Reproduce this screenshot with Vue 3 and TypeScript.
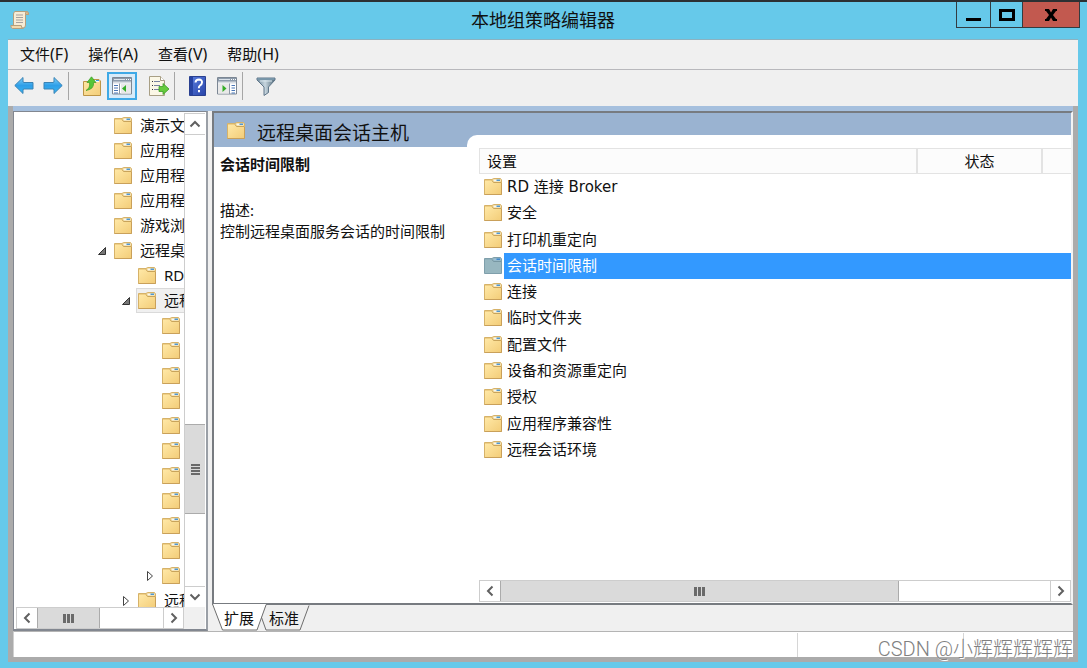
<script setup lang="ts">
import { ref } from 'vue'

interface TreeNode {
  label: string
  depth: number
  state?: 'open' | 'closed'
  selected?: boolean
}

const menus = [
  { text: '文件', key: '(F)' },
  { text: '操作', key: '(A)' },
  { text: '查看', key: '(V)' },
  { text: '帮助', key: '(H)' },
]

const tree: TreeNode[] = [
  { label: '演示文', depth: 0 },
  { label: '应用程', depth: 0 },
  { label: '应用程', depth: 0 },
  { label: '应用程', depth: 0 },
  { label: '游戏浏', depth: 0 },
  { label: '远程桌', depth: 0, state: 'open' },
  { label: 'RD', depth: 1 },
  { label: '远程', depth: 1, state: 'open', selected: true },
  ...Array.from({ length: 10 }, (): TreeNode => ({ label: '', depth: 2 })),
  { label: '', depth: 2, state: 'closed' },
  { label: '远程', depth: 1, state: 'closed' },
]

const settings = [
  'RD 连接 Broker',
  '安全',
  '打印机重定向',
  '会话时间限制',
  '连接',
  '临时文件夹',
  '配置文件',
  '设备和资源重定向',
  '授权',
  '应用程序兼容性',
  '远程会话环境',
]

const current = ref(3)
</script>

<template>
  <div class="window">
    <svg class="defs" width="0" height="0" aria-hidden="true">
      <defs>
        <linearGradient id="fold" x1="0" y1="0" x2="1" y2="1">
          <stop offset="0" stop-color="#ffe8a6" />
          <stop offset="1" stop-color="#f3cd79" />
        </linearGradient>
        <linearGradient id="arrow" x1="0" y1="0" x2="0" y2="1">
          <stop offset="0" stop-color="#7ed0f8" />
          <stop offset="0.5" stop-color="#2f9fe8" />
          <stop offset="1" stop-color="#35b6f4" />
        </linearGradient>
        <linearGradient id="funnel" x1="0" y1="0" x2="1" y2="0">
          <stop offset="0" stop-color="#6f8799" />
          <stop offset="0.45" stop-color="#c7d6df" />
          <stop offset="1" stop-color="#4f6777" />
        </linearGradient>
        <linearGradient id="book" x1="0" y1="0" x2="1" y2="1">
          <stop offset="0" stop-color="#5c7fe0" />
          <stop offset="1" stop-color="#2743a8" />
        </linearGradient>
        <symbol id="folder" viewBox="0 0 18 17">
          <path d="M.5 1.500h7.500L9.500.5h7l1 1.500V16.500H.5z" fill="#efcf85" stroke="#d6b269" />
          <path d="M9.500 1.500h7v2h-7z" fill="#f7f7ef" />
          <path d="M12.500 1.500h3.500v1.500h-3.500z" fill="#4f97d0" />
          <path d="M1 3h7.500l1.500 1.500h7V16H1z" fill="url(#fold)" />
          <path d="M8 2.500 9.500 4.500h7.500" fill="none" stroke="#c9a45a" />
          <path d="M.5 16.500h17V5" fill="none" stroke="#c9a05a" />
        </symbol>
        <symbol id="folder-sel" viewBox="0 0 18 17">
          <path d="M.5 1.500h7.500L9.500.5h7l1 1.500V16.500H.5z" fill="#8fb0ba" stroke="#7f9fab" />
          <path d="M9.500 1.500h7v2h-7z" fill="#9cc0d6" />
          <path d="M12.500 1.500h3.500v1.500h-3.500z" fill="#3f88cc" />
          <path d="M1 3h7.500l1.500 1.500h7V16H1z" fill="#98b7c0" />
          <path d="M8 2.500 9.500 4.500h7.500" fill="none" stroke="#7797a3" />
        </symbol>
      </defs>
    </svg>

    <header class="titlebar">
      <svg class="app-icon" width="20" height="20" viewBox="0 0 20 20" aria-hidden="true">
        <path d="M5 1.500h11.500q2 .2 2 3h-3V15q0 3-2.500 3H3.500V4Q3.500 2 5 1.500z" fill="#f6ecd6" stroke="#b59f7c" />
        <path d="M15.500 4.500V3q.3-1.500 1.500-1.500 1.500 0 1.500 3z" fill="#d8bd8e" stroke="#b59f7c" />
        <path d="M.8 15.500h10.500q0 3 2 3H2.500q-1.700-.5-1.700-3z" fill="#f0d9ad" stroke="#b59f7c" />
        <path d="M6 5h7M6 7.500h7M6 10h7M6 12.500h7" stroke="#a5a2a0" />
      </svg>
      <h1>本地组策略编辑器</h1>
      <div class="controls">
        <button class="min" aria-label="最小化">
          <svg width="16" height="14" viewBox="0 0 16 14"><path d="M0 10h15v3H0z" /></svg>
        </button>
        <button class="max" aria-label="最大化">
          <svg width="16" height="14" viewBox="0 0 16 14"><path d="M1.500 2.500h13v9h-13z" fill="none" stroke="#000" stroke-width="3" /></svg>
        </button>
        <button class="close" aria-label="关闭">
          <svg width="14" height="14" viewBox="0 0 14 14"><path d="M1 1h4l2 3.500L9 1h4v2h-1L9 7l3 4h1v2H9L7 9.500 5 13H1v-2h1l3-4-3-4H1z" /></svg>
        </button>
      </div>
    </header>

    <div class="client">
      <nav class="menubar">
        <button v-for="m in menus" :key="m.key">{{ m.text }}<span>{{ m.key }}</span></button>
      </nav>

      <div class="toolbar" role="toolbar">
        <button class="tool" aria-label="后退">
          <svg width="20" height="20" viewBox="0 0 20 20"><path d="M.8 9.500 9 1.500V6l1 .5h9v6.500h-9l-1 .5v4z" fill="url(#arrow)" stroke="#3a83b5" /></svg>
        </button>
        <button class="tool next" aria-label="前进">
          <svg width="20" height="20" viewBox="0 0 20 20"><path d="M19.200 9.500 11 1.500V6l-1 .5H1v6.500h9l1 .5v4z" fill="url(#arrow)" stroke="#3a83b5" /></svg>
        </button>
        <i class="sep"></i>
        <button class="tool up" aria-label="向上">
          <svg width="20" height="20" viewBox="0 0 20 20">
            <path d="M1.500 5.500h7l1.500-2h7l1.500 1.500v14.500h-17z" fill="url(#fold)" stroke="#bd9546" />
            <path d="M12 4h5v2h-5z" fill="#eff8ff" /><path d="M14 4h3v1h-3z" fill="#4099dc" />
            <path d="M4 14.500Q8.500 12 7.500 6.500H5L9.500.8 14 6.500h-2.500Q12.500 13 4 14.500z" fill="#55c538" stroke="#3b9d25" stroke-width=".7" />
          </svg>
        </button>
        <button class="tool active" aria-label="显示/隐藏控制台树">
          <svg width="20" height="18" viewBox="0 0 20 18">
            <path d="M.5.5h19v16.500H.5z" fill="#fff" stroke="#7c8794" />
            <path d="M1 1h18v4H1z" fill="#8d9bab" /><path d="M2 2.500h11" stroke="#dde4eb" /><path d="M14 2.500h1m1 0h1m1 0h1" stroke="#fff" />
            <path d="M1 5.500h18" stroke="#d8dde3" stroke-width="2" /><path d="M7.500 6.500V17" stroke="#8d98a4" />
            <path d="M2 8.500h4M2 11h4M2 13.500h4M2 16h4" stroke="#4976b6" />
            <path d="M9 7h10v9.500H9z" fill="#e9e9e9" /><path d="M14 8v7l-4-3.500z" fill="#34ad28" />
          </svg>
        </button>
        <button class="tool export" aria-label="导出列表">
          <svg width="20" height="20" viewBox="0 0 20 20">
            <path d="M.5.5h11l4 4v15H.5z" fill="#fbf7e6" stroke="#a89f85" /><path d="M11.500.5v4h4" fill="#fff" stroke="#a89f85" />
            <path d="M3 5.500h1m-1 4h1m-1 4h1" stroke="#333" /><path d="M5 5.500h6M5 9.500h6M5 13.500h6" stroke="#7a83a0" />
            <path d="M10 10.500h4V7.500l6 5.500-6 5.500v-3h-4z" fill="#65cb3d" stroke="#3f9c2a" stroke-width=".8" />
          </svg>
        </button>
        <i class="sep"></i>
        <button class="tool help" aria-label="帮助">
          <svg width="17" height="20" viewBox="0 0 17 20">
            <path d="M.5.500h16v19H.5z" fill="url(#book)" stroke="#2a4090" /><path d="M1 1h3v18H1z" fill="#2743a3" />
            <path d="M6.500 6.500Q6.700 3.500 10 3.500q3.200.2 3 3-.1 1.800-2 3-1.200.8-1.200 2.800" fill="none" stroke="#fff" stroke-width="2" /><path d="M9 14h2v2.300H9z" fill="#fff" />
          </svg>
        </button>
        <button class="tool pane" aria-label="显示/隐藏操作窗格">
          <svg width="20" height="18" viewBox="0 0 20 18">
            <path d="M.5.5h19v16.500H.5z" fill="#fff" stroke="#7c8794" />
            <path d="M1 1h18v4H1z" fill="#8d9bab" /><path d="M2 2.500h11" stroke="#dde4eb" /><path d="M14 2.500h1m1 0h1m1 0h1" stroke="#fff" />
            <path d="M1 5.500h18" stroke="#d8dde3" stroke-width="2" /><path d="M12.500 6.500V17" stroke="#8d98a4" />
            <path d="M14.500 8.500H18m-3.500 2.500H18m-3.500 2.500H18m-3.500 2.500H18" stroke="#4976b6" />
            <path d="M1 7h11v9.500H1z" fill="#e9e9e9" /><path d="M5.500 8v7l4-3.500z" fill="#34ad28" />
          </svg>
        </button>
        <i class="sep"></i>
        <button class="tool filter" aria-label="筛选器">
          <svg width="20" height="20" viewBox="0 0 20 20">
            <path d="M1 2h18v2l-6.500 7v5.500l-4.500 3V11L1 4z" fill="url(#funnel)" stroke="#60778a" /><path d="M1.500 2h17v2h-17z" fill="#7795a8" /><path d="M4 5h12" stroke="#d9e7ee" />
          </svg>
        </button>
      </div>

      <main class="workspace">
        <div class="panes">
          <aside class="tree-pane">
            <ul class="tree">
              <li v-for="(n, i) in tree" :key="i" :class="'depth-' + n.depth">
                <span class="twisty">
                  <svg v-if="n.state === 'open'" width="10" height="10" viewBox="0 0 10 10"><path d="M8.500 1.500v7h-7z" fill="#777" stroke="#333" /></svg>
                  <svg v-else-if="n.state === 'closed'" width="8" height="12" viewBox="0 0 8 12"><path d="M1.500 1.500v9l5-4.500z" fill="#fff" stroke="#444" /></svg>
                </span>
                <span class="node" :class="{ selected: n.selected }">
                  <svg width="18" height="17" aria-hidden="true"><use href="#folder" /></svg>
                  <span>{{ n.label }}</span>
                </span>
              </li>
            </ul>
            <div class="vbar">
              <button aria-label="向上滚动"><svg width="12" height="8" viewBox="0 0 12 8"><path d="m1.500 6.500 4.500-4.500 4.500 4.500" /></svg></button>
              <div class="track"><div class="thumb"><i></i><i></i><i></i><i></i></div></div>
              <button aria-label="向下滚动"><svg width="12" height="8" viewBox="0 0 12 8"><path d="m1.500 1.500 4.500 4.500 4.500-4.500" /></svg></button>
            </div>
            <div class="hbar">
              <button aria-label="向左滚动"><svg width="8" height="12" viewBox="0 0 8 12"><path d="M6.500 1.500 2 6l4.500 4.500" /></svg></button>
              <div class="track"><div class="thumb"><i></i><i></i><i></i></div></div>
              <button aria-label="向右滚动"><svg width="8" height="12" viewBox="0 0 8 12"><path d="M1.500 1.500 6 6l-4.500 4.500" /></svg></button>
            </div>
          </aside>

          <section class="result-pane">
            <div class="extended">
              <div class="details">
                <div class="heading">
                  <svg width="18" height="17" aria-hidden="true"><use href="#folder" /></svg>
                  <h2>远程桌面会话主机</h2>
                </div>
                <div class="description">
                  <h3>会话时间限制</h3>
                  <p>描述:</p>
                  <p>控制远程桌面服务会话的时间限制</p>
                </div>
              </div>
              <div class="list">
                <table>
                  <colgroup><col /><col class="status-col" /><col class="rest-col" /></colgroup>
                  <thead>
                    <tr><th class="name">设置</th><th>状态</th><th></th></tr>
                  </thead>
                  <tbody>
                    <tr v-for="(s, i) in settings" :key="s" @click="current = i">
                      <td colspan="3">
                        <div class="item" :class="{ current: current === i }">
                          <svg width="18" height="17" aria-hidden="true"><use :href="current === i ? '#folder-sel' : '#folder'" /></svg>
                          <span>{{ s }}</span>
                        </div>
                      </td>
                    </tr>
                  </tbody>
                </table>
                <div class="hbar">
                  <button aria-label="向左滚动"><svg width="8" height="12" viewBox="0 0 8 12"><path d="M6.500 1.500 2 6l4.500 4.500" /></svg></button>
                  <div class="track"><div class="thumb"><i></i><i></i><i></i></div></div>
                  <button aria-label="向右滚动"><svg width="8" height="12" viewBox="0 0 8 12"><path d="M1.500 1.500 6 6l-4.500 4.500" /></svg></button>
                </div>
              </div>
            </div>
            <div class="tabs">
              <button class="tab on">
                <svg width="56" height="27" viewBox="0 0 56 27" aria-hidden="true"><path d="M.5 0 10.500 26H45L54 0z" fill="#fff" /><path d="M.5 0 10.500 26H45L54 1" fill="none" stroke="#6e6e6e" /></svg>
                <span>扩展</span>
              </button>
              <button class="tab">
                <svg width="50" height="27" viewBox="0 0 50 27" aria-hidden="true"><path d="M4.500 1.500 1 12l5 14h34l9-24.500z" fill="#efefef" /><path d="M4.500 1.500 1 12l5 14h34l9-24.500" fill="none" stroke="#6e6e6e" /></svg>
                <span>标准</span>
              </button>
            </div>
          </section>
        </div>
        <footer class="statusbar"><span></span><span></span><span></span></footer>
      </main>
    </div>
    <div class="watermark">CSDN @小辉辉辉辉辉</div>
  </div>
</template>

<style>
body {
  margin: 0;
}
</style>

<style scoped>
.window,
.window * {
  box-sizing: border-box;
}
.window {
  position: relative;
  display: flex;
  flex-direction: column;
  min-height: 100vh;
  padding: 0 9px 6px 8px;
  border-top: 2px solid #2c3033;
  background: #66c9ea;
  color: #111;
  font: 15px/21px "Noto Sans", "Noto Sans CJK SC", sans-serif;
}
.defs {
  position: absolute;
}
button {
  display: flex;
  align-items: center;
  justify-content: center;
  padding: 0;
  border: 0;
  background: none;
  color: inherit;
  font: inherit;
}
svg {
  display: block;
  flex: none;
}
h1,
h2,
h3,
p,
ul {
  margin: 0;
  padding: 0;
}

.titlebar {
  display: grid;
  grid-template-columns: 122px 1fr 124px;
  height: 37px;
  margin-right: -2px;
}
.app-icon {
  margin: 8px 0 0 2px;
}
h1 {
  font-size: 18px;
  line-height: 36px;
  font-weight: 400;
  text-align: center;
}
.controls {
  display: flex;
  height: 26px;
  border: 1px solid #333c41;
  border-top: 0;
}
.controls button {
  height: 25px;
}
.min {
  width: 34px;
  border-right: 1px solid #333c41;
}
.controls .max {
  width: 32px;
  border-right: 1px solid #333c41;
}
.controls .close {
  flex: 1;
  background: #c2594f;
}

.client {
  flex: 1;
  display: flex;
  flex-direction: column;
  border-top: 1px solid #8cb2c0;
  background: #f0f0f0;
}
.menubar {
  display: flex;
  gap: 20px;
  height: 30px;
  padding-left: 12px;
  border-bottom: 1px solid #b8b8bc;
}
.menubar span {
  font-size: 16px;
}
.toolbar {
  display: flex;
  height: 36px;
  padding: 2px 0 0 6px;
}
.tool {
  width: 20px;
  height: 28px;
}
.next {
  margin-left: 9px;
}
.sep {
  width: 1px;
  height: 28px;
  margin-left: 5px;
  background: #a6a6a6;
}
.up {
  margin-left: 13px;
}
.active {
  width: 30px;
  margin-left: 5px;
  border: 2px solid #3fa9e6;
  background: #d7ebf9;
}
.export {
  margin-left: 12px;
}
.help {
  width: 17px;
  margin-left: 14px;
}
.pane {
  margin-left: 11px;
}
.filter {
  margin-left: 13px;
}

.workspace {
  flex: 1;
  display: flex;
  flex-direction: column;
  border: 5px solid #ababab;
  border-top: 0;
}
.panes {
  flex: 1;
  display: flex;
  background: #f0f0f0;
  border-top: 5px solid #a6c0de;
}
.tree-pane {
  display: grid;
  grid-template: minmax(0, 1fr) 22px / 1fr 21px;
  width: 195px;
  margin-right: 4px;
  padding: 1px 1px 0 2px;
  border: 1px solid #828790;
  border-right-width: 2px;
  border-bottom-width: 2px;
  border-right-color: #9a9fa6;
  background: #fff;
}
.tree {
  height: 0;
  min-height: 100%;
  overflow: hidden;
  list-style: none;
}
.tree li {
  display: flex;
  height: 25px;
  white-space: nowrap;
}
.depth-0 {
  padding-left: 76px;
}
.depth-1 {
  padding-left: 100px;
}
.depth-2 {
  padding-left: 124px;
}
.twisty {
  flex: none;
  display: flex;
  align-items: center;
  justify-content: center;
  width: 20px;
}
.node {
  display: flex;
  align-items: center;
  gap: 8px;
  padding: 0 1px;
  border: 1px solid transparent;
}
.node.selected {
  border-color: #dadada;
  background: #f0f0f0;
}

.vbar {
  display: flex;
  flex-direction: column;
  border: 1px solid #cdcdcd;
  border-width: 1px 0 0 1px;
}
.vbar button {
  height: 21px;
  border-bottom: 1px solid #cdcdcd;
}
.vbar button:last-child {
  border-top: 1px solid #cdcdcd;
  border-bottom: 0;
}
.hbar button path,
.vbar button path {
  fill: none;
  stroke: #606060;
  stroke-width: 2;
}
.vbar .track {
  flex: 1;
  display: grid;
  grid-template-rows: 289fr 90fr 72fr;
}
.vbar .thumb {
  grid-row: 2;
  display: flex;
  flex-direction: column;
  align-items: center;
  justify-content: center;
  gap: 1px;
  border: 1px solid #ababab;
  border-width: 1px 0;
  background: #dadada;
}
.vbar .thumb i {
  width: 9px;
  height: 2px;
  background: #6a6a6a;
}
.hbar {
  display: flex;
  height: 22px;
  border: 1px solid #cdcdcd;
  background: #fff;
}
.hbar button {
  width: 20px;
  flex: none;
}
.hbar button:last-child {
  border-left: 1px solid #cdcdcd;
}
.hbar .track {
  flex: 1;
  display: grid;
  grid-template-columns: 63fr 64fr;
}
.hbar .thumb {
  display: flex;
  align-items: center;
  justify-content: center;
  gap: 1px;
  border: 1px solid #ababab;
  border-width: 0 1px;
  background: #dadada;
}
.hbar .thumb i {
  width: 3px;
  height: 9px;
  background: #6a6a6a;
}
.tree-pane::after {
  content: "";
  background: #f0f0f0;
}

.result-pane {
  flex: 1;
  display: flex;
  flex-direction: column;
  min-width: 0;
}
.extended {
  flex: 1;
  display: flex;
  border: 2px solid #777b80;
  border-right-color: #f4f4f4;
  background: #9ab3d1;
}
.details {
  display: flex;
  flex-direction: column;
  width: 253px;
}
.heading {
  display: flex;
  align-items: center;
  gap: 12px;
  height: 34px;
  padding-left: 13px;
}
h2 {
  padding-top: 5px;
  font-size: 19px;
  line-height: 28px;
  font-weight: 400;
}
.description {
  flex: 1;
  padding: 7px 6px;
  background: #fff;
}
h3 {
  margin-bottom: 25px;
  font-size: 15px;
  font-weight: 700;
}
.list {
  flex: 1;
  display: flex;
  flex-direction: column;
  justify-content: space-between;
  min-width: 0;
  margin-top: 22px;
  padding: 13px 0 1px 12px;
  border-radius: 10px 0 0 0;
  background: #fff;
}
table {
  width: 100%;
  height: 315px;
  table-layout: fixed;
  border-collapse: separate;
  border-spacing: 0;
}
.status-col {
  width: 125px;
}
.rest-col {
  width: 28px;
}
th {
  height: 26px;
  padding: 0;
  border: 1px solid #e3e3e3;
  border-width: 1px 2px 1px 0;
  background: #fcfcfc;
  font-weight: 400;
}
th.name {
  padding-left: 7px;
  border-left-width: 1px;
  text-align: left;
}
th:last-child {
  border-right: 0;
}
td {
  padding: 0;
}
.item {
  display: flex;
  align-items: flex-start;
  gap: 2px;
  height: 26px;
  padding-left: 5px;
  font-family: "DejaVu Sans", "Noto Sans CJK SC", sans-serif;
}
.item svg {
  margin-top: 4px;
}
.item span {
  flex: 1;
  padding-left: 3px;
  line-height: 26px;
}
.item.current span {
  background: #3399ff;
  color: #fff;
}
.list .track {
  grid-template-columns: 398fr 151fr;
}

.tabs {
  display: flex;
  height: 26px;
}
.tab {
  position: relative;
  width: 54px;
}
.tab + .tab {
  width: 48px;
  margin-left: -6px;
}
.tab svg {
  position: absolute;
  top: -1px;
  left: 0;
}
.tab span {
  position: relative;
}
.tab.on {
  z-index: 1;
}

.statusbar {
  display: grid;
  grid-template-columns: 1fr 166px 110px;
  height: 26px;
  border-top: 1px solid #b4b4b4;
  border-left: 1px solid #d0d0d0;
  background: #fff;
}
.statusbar span + span {
  margin-top: 1px;
  border-left: 1px solid #d6d6d6;
}
.watermark {
  position: absolute;
  right: 14px;
  bottom: 5px;
  color: #808080;
  font: 300 20px/28px Roboto, "Noto Sans CJK SC", sans-serif;
  text-shadow: 1px 1px 0 #fff;
}
</style>
